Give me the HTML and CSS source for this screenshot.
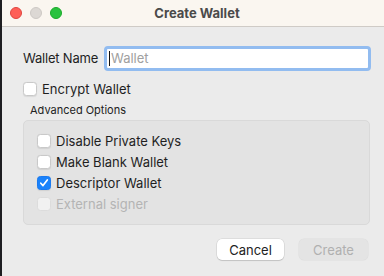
FILE: index.html
```html
<!DOCTYPE html>
<html>
<head>
<meta charset="utf-8">
<link rel="stylesheet" href="styles.css">
</head>
<body>
<div class="desk">
  <div class="edge"></div>
  <div class="window">
    <div class="titlebar">
      <div class="lights">
        <span class="light red"></span>
        <span class="light gray"></span>
        <span class="light green"></span>
      </div>
      <div class="title">Create Wallet</div>
    </div>
    <div class="content">
      <div class="row name-row">
        <label class="label">Wallet Name</label>
        <div class="input"><span class="caret"></span><span class="placeholder">Wallet</span></div>
      </div>
      <div class="check-row encrypt">
        <span class="box"></span><span class="ctext">Encrypt Wallet</span>
      </div>
      <div class="group-title">Advanced Options</div>
      <div class="group">
        <div class="check-row"><span class="box"></span><span class="ctext">Disable Private Keys</span></div>
        <div class="check-row"><span class="box"></span><span class="ctext">Make Blank Wallet</span></div>
        <div class="check-row"><span class="box checked"><svg width="10" height="10" viewBox="0 0 10 10"><path d="M1.8 5.2 L4 7.6 L8.3 2" fill="none" stroke="#fff" stroke-width="1.7" stroke-linecap="round" stroke-linejoin="round"/></svg></span><span class="ctext">Descriptor Wallet</span></div>
        <div class="check-row disabled"><span class="box"></span><span class="ctext">External signer</span></div>
      </div>
      <div class="buttons">
        <div class="btn cancel">Cancel</div>
        <div class="btn create">Create</div>
      </div>
    </div>
  </div>
</div>
</body>
</html>
```
FILE: styles.css
```css
* { box-sizing: border-box; }
html, body { margin: 0; padding: 0; }
body {
  width: 384px; height: 276px; overflow: hidden;
  font-family: Inter, "Liberation Sans", sans-serif;
  color: #222;
}
.desk { display: flex; height: 276px; background: #1e1e21; }
.edge { width: 2px; flex: none; }
.window { flex: 1; display: flex; flex-direction: column; background: #ebebeb; }
.titlebar {
  height: 27px; flex: none; position: relative;
  background: #faf6f0; border-bottom: 1px solid #cfcbc6;
  display: flex; align-items: center;
}
.lights { display: flex; gap: 8px; padding-left: 8px; }
.light { width: 12px; height: 12px; border-radius: 50%; display: block; }
.red { background: #fe5f57; border: 0.5px solid #e0443e; }
.gray { background: #dcd8d4; border: 0.5px solid #cdc9c5; }
.green { background: #29c23f; border: 0.5px solid #1aab29; }
.title {
  position: absolute; left: 0; right: 0; top: 0; height: 26px; line-height: 26px;
  text-align: center; font-weight: 700; font-size: 13px; color: #4a4a4a;
  padding-left: 8px;
}
.content { padding: 18px 13px 0 21px; font-size: 13px; }
.name-row { display: flex; align-items: center; height: 26px; }
.label { width: 81px; color: #1f1f1f; letter-spacing: -0.2px; }
.input {
  width: 267px; height: 25px; background: #fff;
  border: 3px solid #92bcf0; border-radius: 4px;
  display: flex; align-items: center; padding-left: 2px;
  color: #a0a0a0; font-size: 13px;
}
.caret { width: 1px; height: 15px; background: #111; margin-right: 1px; }
.check-row { display: flex; align-items: center; height: 21px; }
.encrypt { margin-top: 7px; }
.box {
  width: 14px; height: 14px; border-radius: 3.5px; flex: none;
  background: #fff; border: 1px solid #c9c9c9;
  box-shadow: 0 0.5px 1px rgba(0,0,0,0.08);
  display: flex; align-items: center; justify-content: center;
  margin-right: 5px;
}
.box.checked { background: #1a82fb; border-color: #1a7af0; }
.ctext { color: #1f1f1f; }
.disabled .box { background: #f1f1f1; border-color: #dcdcdc; box-shadow: none; }
.disabled .ctext { color: #b4b4b4; }
.group-title { font-size: 11px; margin: 4px 0 3px 7px; color: #222; }
.group {
  width: 347px; height: 105px;
  background: #e3e3e3; border: 1px solid #d9d9d9; border-radius: 5px;
  padding: 9px 0 0 13px;
}
.buttons { display: flex; justify-content: flex-end; gap: 15px; margin-top: 14px; padding-right: 3px; }
.btn {
  height: 21px; border-radius: 5px; font-size: 13px;
  display: flex; align-items: center; justify-content: center;
}
.cancel { width: 67px; background: #fff; color: #222; box-shadow: 0 0 0 0.5px rgba(0,0,0,0.12), 0 1px 1px rgba(0,0,0,0.12); }
.create { width: 69px; background: #e4e4e4; color: #b0b0b0; box-shadow: 0 0 0 0.5px rgba(0,0,0,0.06); }
```
